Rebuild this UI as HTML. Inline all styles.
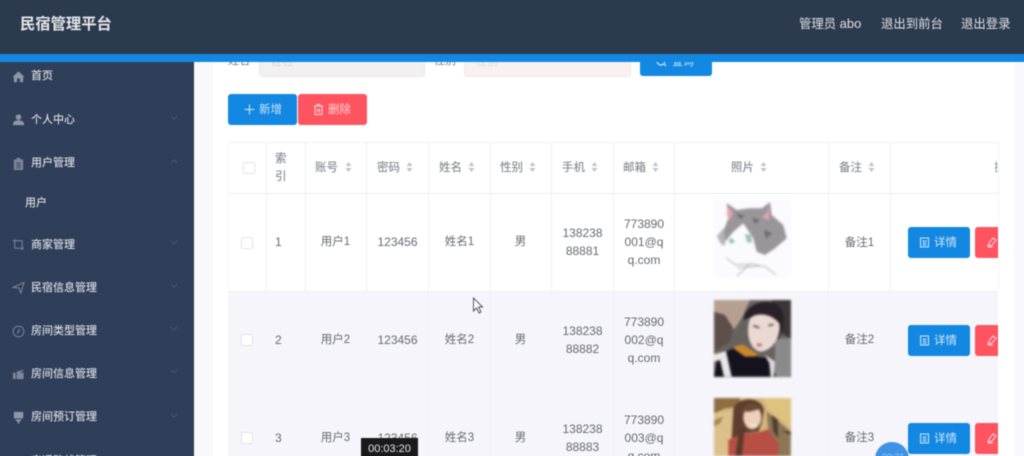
<!DOCTYPE html>
<html lang="zh"><head><meta charset="utf-8"><title>民宿管理平台</title>
<style>
html,body{margin:0;padding:0;width:1024px;height:456px;overflow:hidden;background:#fff}
body{font-family:"Liberation Sans","Noto Sans CJK SC",sans-serif;position:relative}
.a{position:absolute;white-space:nowrap}
#wrap{position:absolute;left:-6px;top:-6px;width:1036px;height:468px;overflow:hidden;filter:blur(.45px)}
#in{position:absolute;left:6px;top:6px;width:1024px;height:456px}
.m{font-size:11px;color:#d5d9df;left:31px;line-height:14px;font-weight:500}
.chev{position:absolute;left:170px;width:8px;height:5px}
.ic{position:absolute;left:12px;width:13px;height:13px}
.th{font-size:11.5px;color:#8b8f96;line-height:18px;font-weight:500}
.td{font-size:12px;color:#666a70;line-height:18px;text-align:center}
.z{font-size:11.5px}
.vl{position:absolute;width:1px;background:#f0f1f4}
.hl{position:absolute;height:1px;background:#ebecef}
.sort{position:absolute;width:7px;height:10px}
.btn{position:absolute;border-radius:3px;color:#dfeefa;font-size:12px;text-align:center}
.cb{position:absolute;width:10px;height:10px;border:1px solid #e3e4e8;border-radius:2px;background:#fff}
.ph{filter:blur(1.1px)}
</style></head><body><div id="wrap"><div id="in">

<!-- content backgrounds -->
<div class="a" style="left:194px;top:62px;width:19px;height:400px;background:#f9f9fc"></div>
<div class="a" style="left:1014px;top:62px;width:16px;height:400px;background:#f9f9fc"></div>

<!-- search row -->
<div class="a" style="left:228px;top:52px;font-size:11px;color:#777;line-height:18px">姓名</div>
<div class="a" style="left:259px;top:50px;width:166px;height:27px;background:#f3f0f1;border:1px solid #ebe8e9;border-radius:3px;box-sizing:border-box"></div>
<div class="a" style="left:271px;top:54px;font-size:11px;color:#d8d6d8;line-height:16px">姓名</div>
<div class="a" style="left:434px;top:52px;font-size:11px;color:#777;line-height:18px">性别</div>
<div class="a" style="left:464px;top:50px;width:167px;height:27px;background:#f8f0f1;border:1px solid #f0e9ea;border-radius:3px;box-sizing:border-box"></div>
<div class="a" style="left:476px;top:54px;font-size:11px;color:#ddd8da;line-height:16px">性别</div>
<div class="a" style="left:640px;top:46px;width:72px;height:30px;background:#1288e2;border-radius:3px"></div>
<div class="a" style="left:672px;top:55px;font-size:11px;color:#cfe6f8;line-height:14px">查询</div>
<svg class="a" style="left:655px;top:56px" width="13" height="13" viewBox="0 0 13 13" fill="none" stroke="#cfe6f8" stroke-width="1.2"><circle cx="6" cy="5" r="4"/><path d="M9 8l2 2"/></svg>

<!-- action buttons -->
<div class="btn" style="left:228px;top:94px;width:69px;height:31px;background:#1288e2"></div>
<svg class="a" style="left:244px;top:104px" width="11" height="11" viewBox="0 0 11 11" stroke="#d6ebfa" stroke-width="1"><path d="M5.500 .5v10M.5 5.500h10"/></svg>
<div class="a" style="left:259px;top:102px;font-size:11.5px;line-height:16px;color:#cde5f7">新增</div>
<div class="btn" style="left:298px;top:94px;width:69px;height:31px;background:#fd5460"></div>
<svg class="a" style="left:313px;top:103px" width="11" height="13" viewBox="0 0 11 13" fill="none" stroke="#fbdadd" stroke-width="1"><path d="M1 3h9M4 3V1.500h3V3M2 3v8.500h7V3M4.500 5.500v4M6.500 5.500v4"/></svg>
<div class="a" style="left:328px;top:102px;font-size:11.5px;line-height:16px;color:#fbd2d5">删除</div>

<!-- table -->
<div class="a" style="left:228px;top:291px;width:770px;height:171px;background:#f5f5fb"></div>
<div class="hl" style="left:228px;top:142px;width:770px;background:#f2f3f5"></div>
<div class="hl" style="left:228px;top:193px;width:770px"></div>
<div class="hl" style="left:228px;top:291px;width:770px;background:#f0f0f5"></div>
<div class="vl" style="left:228px;top:142px;height:149px;background:#f4f5f7"></div>
<div class="vl" style="left:266px;top:142px;height:149px"></div>
<div class="vl" style="left:305px;top:142px;height:149px"></div>
<div class="vl" style="left:366px;top:142px;height:149px"></div>
<div class="vl" style="left:428px;top:142px;height:149px"></div>
<div class="vl" style="left:490px;top:142px;height:149px"></div>
<div class="vl" style="left:551px;top:142px;height:149px"></div>
<div class="vl" style="left:613px;top:142px;height:149px"></div>
<div class="vl" style="left:674px;top:142px;height:149px"></div>
<div class="vl" style="left:828px;top:142px;height:149px"></div>
<div class="vl" style="left:890px;top:142px;height:149px"></div>
<div class="vl" style="left:998px;top:142px;height:149px;background:#f4f5f7"></div>
<div class="vl" style="left:428px;top:291px;height:171px;background:#f1f1f6"></div>
<div class="vl" style="left:490px;top:291px;height:171px;background:#f1f1f6"></div>
<div class="vl" style="left:613px;top:291px;height:171px;background:#f1f1f6"></div>
<div class="vl" style="left:674px;top:291px;height:171px;background:#f1f1f6"></div>
<div class="vl" style="left:828px;top:291px;height:171px;background:#f1f1f6"></div>

<!-- header cells -->
<div class="cb" style="left:243px;top:162px"></div>
<div class="a th" style="left:275px;top:150px">索<br>引</div>
<div class="a th" style="left:315px;top:159px">账号</div>
<div class="a th" style="left:377px;top:159px">密码</div>
<div class="a th" style="left:439px;top:159px">姓名</div>
<div class="a th" style="left:500px;top:159px">性别</div>
<div class="a th" style="left:562px;top:159px">手机</div>
<div class="a th" style="left:623px;top:159px">邮箱</div>
<div class="a th" style="left:731px;top:159px">照片</div>
<div class="a th" style="left:839px;top:159px">备注</div>
<div class="a" style="left:994px;top:159px;width:4px;overflow:hidden;font-size:11.5px;line-height:18px;color:#8b8f96">操</div>
<svg class="sort" style="left:345px;top:162px" viewBox="0 0 7 10" fill="#c0c4cc"><path d="M3.500 0l3 4H.5zM3.500 10l3-4H.5z"/></svg>
<svg class="sort" style="left:406px;top:162px" viewBox="0 0 7 10" fill="#c0c4cc"><path d="M3.500 0l3 4H.5zM3.500 10l3-4H.5z"/></svg>
<svg class="sort" style="left:468px;top:162px" viewBox="0 0 7 10" fill="#c0c4cc"><path d="M3.500 0l3 4H.5zM3.500 10l3-4H.5z"/></svg>
<svg class="sort" style="left:529px;top:162px" viewBox="0 0 7 10" fill="#c0c4cc"><path d="M3.500 0l3 4H.5zM3.500 10l3-4H.5z"/></svg>
<svg class="sort" style="left:591px;top:162px" viewBox="0 0 7 10" fill="#c0c4cc"><path d="M3.500 0l3 4H.5zM3.500 10l3-4H.5z"/></svg>
<svg class="sort" style="left:652px;top:162px" viewBox="0 0 7 10" fill="#c0c4cc"><path d="M3.500 0l3 4H.5zM3.500 10l3-4H.5z"/></svg>
<svg class="sort" style="left:760px;top:162px" viewBox="0 0 7 10" fill="#c0c4cc"><path d="M3.500 0l3 4H.5zM3.500 10l3-4H.5z"/></svg>
<svg class="sort" style="left:868px;top:162px" viewBox="0 0 7 10" fill="#c0c4cc"><path d="M3.500 0l3 4H.5zM3.500 10l3-4H.5z"/></svg>

<!-- row 1 -->
<div class="cb" style="left:241px;top:237px"></div>
<div class="a td" style="left:275px;top:233px">1</div>
<div class="a td z" style="left:305px;top:233px;width:61px">用户1</div>
<div class="a td" style="left:367px;top:233px;width:61px">123456</div>
<div class="a td z" style="left:429px;top:233px;width:61px">姓名1</div>
<div class="a td z" style="left:490px;top:233px;width:61px">男</div>
<div class="a td" style="left:552px;top:224px;width:61px">138238<br>88881</div>
<div class="a td" style="left:614px;top:215px;width:60px">773890<br>001@q<br>q.com</div>
<div class="a td z" style="left:829px;top:234px;width:61px">备注1</div>

<!-- row 2 -->
<div class="cb" style="left:241px;top:334px"></div>
<div class="a td" style="left:275px;top:331px">2</div>
<div class="a td z" style="left:305px;top:331px;width:61px">用户2</div>
<div class="a td" style="left:367px;top:331px;width:61px">123456</div>
<div class="a td z" style="left:429px;top:331px;width:61px">姓名2</div>
<div class="a td z" style="left:490px;top:331px;width:61px">男</div>
<div class="a td" style="left:552px;top:322px;width:61px">138238<br>88882</div>
<div class="a td" style="left:614px;top:313px;width:60px">773890<br>002@q<br>q.com</div>
<div class="a td z" style="left:829px;top:331px;width:61px">备注2</div>

<!-- row 3 -->
<div class="cb" style="left:241px;top:432px"></div>
<div class="a td" style="left:275px;top:429px">3</div>
<div class="a td z" style="left:305px;top:429px;width:61px">用户3</div>
<div class="a td" style="left:367px;top:429px;width:61px">123456</div>
<div class="a td z" style="left:429px;top:429px;width:61px">姓名3</div>
<div class="a td z" style="left:490px;top:429px;width:61px">男</div>
<div class="a td" style="left:552px;top:420px;width:61px">138238<br>88883</div>
<div class="a td" style="left:614px;top:411px;width:60px">773890<br>003@q<br>q.com</div>
<div class="a td z" style="left:829px;top:429px;width:61px">备注3</div>

<!-- photos -->
<svg class="a ph" style="left:714px;top:200px" width="77" height="78" viewBox="0 0 77 78">
<rect width="77" height="78" fill="#fbfafc"/>
<path d="M12.700 3.300L22.700 10 36 8.300 47.700 8.300 56 2.300 57.700 15 69.300 25 72.700 38.300 61 48.300 51 55 42.700 51.700 39.300 38.300 32.700 28.300 29.300 23.300 19.300 31.700 11 41.700 9.300 31.700 14.300 18.300z" fill="#98969b"/>
<path d="M3 36L10 28 11 46 7 44z" fill="#b4b3b7"/>
<path d="M13.500 6L19 13 15.500 21 13 15zM54.500 5.500L53 13 48 17 55 20z" fill="#e8a3b0"/>
<path d="M14 40l4-2 3 4-4 2zM31 34l6 1 1 8-5-1z" fill="#95c3b8"/>
<path d="M22 13l9 3-5 3zM38 18l8 2-5 4zM50 30l8 3-6 6z" fill="#6e6c72"/>
<path d="M12 58l10 7 16-1 14 3 10 8M36 64l-13 12M23 68l22-2" fill="none" stroke="#b2b2b6" stroke-width=".9"/>
</svg>
<svg class="a ph" style="left:714px;top:300px" width="77" height="77" viewBox="0 0 77 77">
<rect width="77" height="77" fill="#66625f"/>
<g transform="translate(-14 -5) scale(.3333)">
<path d="M42 15H150L125 70 105 100 42 130z" fill="#b69f90"/>
<path d="M42 50L75 60 100 100 90 140 42 170z" fill="#5f4f49"/>
<path d="M215 15H272V130L235 110z" fill="#3a3539"/>
<path d="M225 130L272 130V245H225z" fill="#8a8a8c"/>
<path d="M130 75C135 35 175 15 215 22C245 28 255 60 250 95L235 135 170 60z" fill="#282128"/>
<path d="M150 70C170 50 215 55 238 85C245 125 215 170 180 170C150 165 135 115 150 70z" fill="#ead8d3"/>
<path d="M150 70C170 45 210 45 238 85L235 50 190 35 155 50z" fill="#282128"/>
<path d="M100 155L128 148 165 172 175 178 150 190 115 180z" fill="#c9862d"/>
<path d="M42 245L55 180 100 160 135 185 170 185 210 190 228 245z" fill="#14121d"/>
<path d="M42 178L78 168 95 245H72L60 195 42 200z" fill="#e8e6e6"/>
<path d="M195 180L225 200 222 245H212L208 205z" fill="#dcdcdc"/>
<ellipse cx="178" cy="150" rx="9" ry="5" fill="#cf6f7d"/>
<path d="M160 92l18 6M205 92l15-4" stroke="#5d4745" stroke-width="5"/>
</g>
</svg>
<svg class="a ph" style="left:714px;top:398px" width="77" height="58" viewBox="0 0 77 58">
<rect width="77" height="58" fill="#d2b67c"/>
<g transform="translate(-14 -8) scale(.3333)">
<path d="M42 22H120V50L75 55 42 70z" fill="#8f6d40"/>
<path d="M42 70L100 60 90 198H42z" fill="#dbc08b"/>
<path d="M42 90L70 80 60 100 42 110z" fill="#a68a5c"/>
<path d="M190 22H272V110L205 60z" fill="#dfc27f"/>
<path d="M200 65L272 125V198H232L205 120z" fill="#8c7653"/>
<path d="M215 75l5 50 14 20 0-55zM272 125l-30-4 30 14z" fill="#4f3f30"/>
<path d="M100 60C105 20 185 15 192 60L185 100 175 125 125 130 110 180 95 150z" fill="#5e3f2e"/>
<ellipse cx="157" cy="82" rx="27" ry="36" fill="#edd1bc"/>
<path d="M125 65C130 35 180 30 190 65L175 58 150 65z" fill="#6d4a33"/>
<path d="M85 198V150L128 130 170 128 205 118 235 160V198z" fill="#b74f44"/>
<path d="M118 115l16-5-8 88H106z" fill="#5a3a2b"/>
<ellipse cx="160" cy="105" rx="8" ry="3" fill="#f3eee9"/>
</g>
</svg>

<!-- row action buttons -->
<div class="btn" style="left:908px;top:227px;width:62px;height:31px;background:#1288e2"></div>
<div class="btn" style="left:908px;top:325px;width:62px;height:31px;background:#1288e2"></div>
<div class="btn" style="left:908px;top:423px;width:62px;height:31px;background:#1288e2"></div>
<div class="a" style="left:934px;top:236px;font-size:11.5px;line-height:15px;color:#d3e9f9">详情</div>
<div class="a" style="left:934px;top:334px;font-size:11.5px;line-height:15px;color:#d3e9f9">详情</div>
<div class="a" style="left:934px;top:432px;font-size:11.5px;line-height:15px;color:#d3e9f9">详情</div>
<svg class="a" style="left:919px;top:237px" width="11" height="11" viewBox="0 0 11 11" fill="none" stroke="#d3e9f9"><path d="M1.500 1h8v9h-8zM3.500 4h4M3.500 6h4M3.500 8h4"/></svg>
<svg class="a" style="left:919px;top:335px" width="11" height="11" viewBox="0 0 11 11" fill="none" stroke="#d3e9f9"><path d="M1.500 1h8v9h-8zM3.500 4h4M3.500 6h4M3.500 8h4"/></svg>
<svg class="a" style="left:919px;top:433px" width="11" height="11" viewBox="0 0 11 11" fill="none" stroke="#d3e9f9"><path d="M1.500 1h8v9h-8zM3.500 4h4M3.500 6h4M3.500 8h4"/></svg>
<div class="a" style="left:975px;top:227px;width:23px;height:31px;background:#fd5460;border-radius:3px 0 0 3px"></div>
<div class="a" style="left:975px;top:325px;width:23px;height:31px;background:#fd5460;border-radius:3px 0 0 3px"></div>
<div class="a" style="left:975px;top:423px;width:23px;height:31px;background:#fd5460;border-radius:3px 0 0 3px"></div>
<svg class="a" style="left:987px;top:237px" width="11" height="11" viewBox="0 0 11 11" fill="none" stroke="#fbe0e2"><path d="M1 9l1-3 4-5 3 2-4 5zM1 10h5"/></svg>
<svg class="a" style="left:987px;top:335px" width="11" height="11" viewBox="0 0 11 11" fill="none" stroke="#fbe0e2"><path d="M1 9l1-3 4-5 3 2-4 5zM1 10h5"/></svg>
<svg class="a" style="left:987px;top:433px" width="11" height="11" viewBox="0 0 11 11" fill="none" stroke="#fbe0e2"><path d="M1 9l1-3 4-5 3 2-4 5zM1 10h5"/></svg>

<!-- floating circle -->
<div class="a" style="left:875px;top:442px;width:34px;height:34px;border-radius:50%;background:#3f93e6"></div>
<div class="a" style="left:882px;top:452px;font-size:9px;line-height:10px;color:#9fcbf2">00:21</div>

<!-- cursor -->
<svg class="a" style="left:472px;top:297px" width="12" height="18" viewBox="0 0 12 18"><path d="M1.500 1v13l3-3 2.500 5 2-1-2.500-5h4z" fill="#fff" stroke="#55585e" stroke-width="1"/></svg>

<!-- timestamp -->
<div class="a" style="left:361px;top:438px;width:57px;height:24px;background:#1a1a1d;color:#e8e8e8;font-size:11px;line-height:22px;text-align:center">00:03:20</div>

<!-- sidebar -->
<div class="a" style="left:-6px;top:62px;width:200px;height:400px;background:#2f3e59"></div>

<svg class="ic" style="top:70px" viewBox="0 0 14 14" fill="#8f97a6"><path d="M7 1.500L13.500 7.500h-1.500V13H8.500V9h-3v4H2V7.500H.5z"/></svg>
<div class="a m" style="top:69px">首页</div>

<svg class="ic" style="top:113px" viewBox="0 0 14 14" fill="#8f97a6"><circle cx="7" cy="4.500" r="3"/><path d="M1 13c0-4 2.500-5 6-5s6 1 6 5z"/></svg>
<div class="a m" style="top:113px">个人中心</div>
<svg class="chev" style="top:115px" viewBox="0 0 10 6" fill="none" stroke="#566379"><path d="M1 1l4 4 4-4"/></svg>

<svg class="ic" style="top:157px" viewBox="0 0 14 14" fill="#7e8697"><path d="M2 2.500h3V1h4v1.500h3V14H2z"/><path d="M4.500 6.500h5M4.500 9h5M4.500 11.500h5" stroke="#2f3e59"/></svg>
<div class="a m" style="top:156px">用户管理</div>
<svg class="chev" style="top:159px" viewBox="0 0 10 6" fill="none" stroke="#566379"><path d="M1 5l4-4 4 4"/></svg>

<div class="a m" style="left:25px;top:196px">用户</div>

<svg class="ic" style="top:238px" viewBox="0 0 14 14" fill="none" stroke="#7e8697" stroke-width="1.100"><path d="M3 1v10h10M1 3h10v10"/></svg>
<div class="a m" style="top:238px">商家管理</div>
<svg class="chev" style="top:240px" viewBox="0 0 10 6" fill="none" stroke="#566379"><path d="M1 1l4 4 4-4"/></svg>

<svg class="ic" style="top:281px" viewBox="0 0 14 14" fill="none" stroke="#7e8697" stroke-width="1.100"><path d="M1 7L13 1.500 9.500 13 7.500 7.500z"/></svg>
<div class="a m" style="top:281px">民宿信息管理</div>
<svg class="chev" style="top:283px" viewBox="0 0 10 6" fill="none" stroke="#566379"><path d="M1 1l4 4 4-4"/></svg>

<svg class="ic" style="top:325px" viewBox="0 0 14 14" fill="none" stroke="#7e8697" stroke-width="1.100"><circle cx="7" cy="7" r="5.800"/><path d="M8.500 4.500L6.500 7.500 6 9.500" stroke-width="1.300"/></svg>
<div class="a m" style="top:324px">房间类型管理</div>
<svg class="chev" style="top:326px" viewBox="0 0 10 6" fill="none" stroke="#566379"><path d="M1 1l4 4 4-4"/></svg>

<svg class="ic" style="top:367px" viewBox="0 0 14 14" fill="#7e8697"><path d="M1 6h3v7H1zM5 5l7-2v1.500l-4 1.500h4.500v7H5z"/></svg>
<div class="a m" style="top:367px">房间信息管理</div>
<svg class="chev" style="top:369px" viewBox="0 0 10 6" fill="none" stroke="#566379"><path d="M1 1l4 4 4-4"/></svg>

<svg class="ic" style="top:411px" viewBox="0 0 14 14" fill="#8f97a6"><path d="M2 1h10v7H2zM3 9h8l-2 2H8v2.500H6V11H5z"/></svg>
<div class="a m" style="top:410px">房间预订管理</div>
<svg class="chev" style="top:413px" viewBox="0 0 10 6" fill="none" stroke="#566379"><path d="M1 1l4 4 4-4"/></svg>

<div class="a m" style="top:454px">交通路线管理</div>

<!-- top bar -->
<div class="a" style="left:-6px;top:-6px;width:1036px;height:60px;background:#2c3a4e"></div>
<div class="a" style="left:-6px;top:54px;width:1036px;height:8px;background:#1288e2"></div>
<div class="a" style="left:20px;top:15px;font-size:15.3px;line-height:20px;font-weight:700;color:#e6e8eb">民宿管理平台</div>
<div class="a" style="left:799px;top:15px;font-size:12.4px;line-height:18px;color:#dfe2e6">管理员 <span style="font-size:13px">abo</span></div>
<div class="a" style="left:881px;top:15px;font-size:12.4px;line-height:18px;color:#dfe2e6">退出到前台</div>
<div class="a" style="left:961px;top:15px;font-size:12.4px;line-height:18px;color:#dfe2e6">退出登录</div>

</div></div></body></html>
